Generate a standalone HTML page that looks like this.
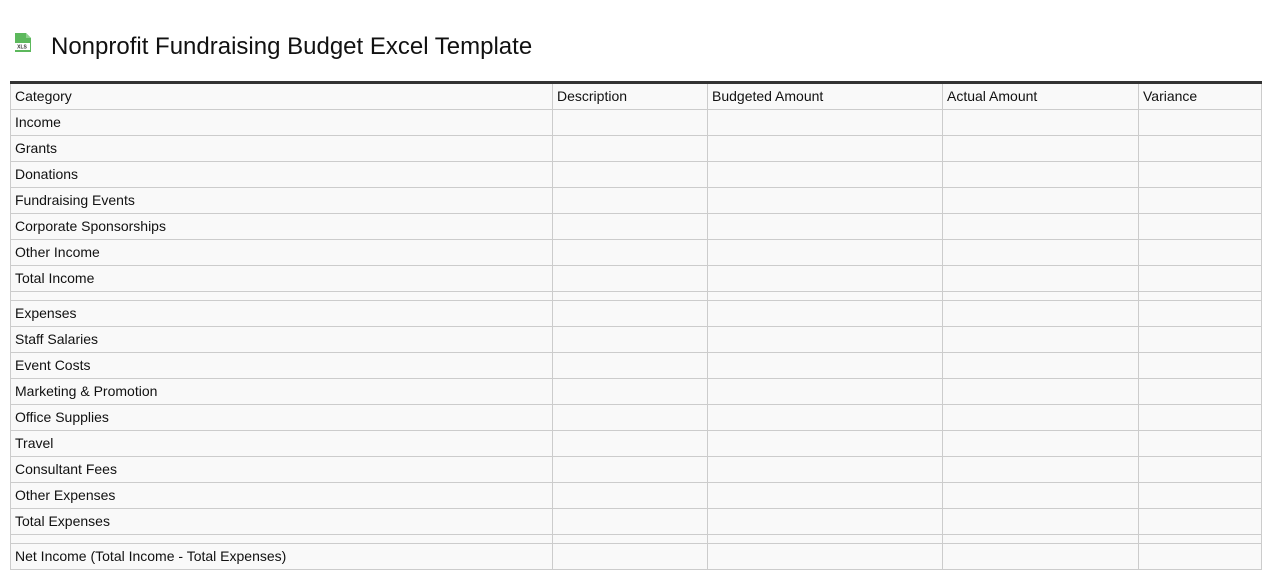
<!DOCTYPE html>
<html><head><style>
body{margin:0;background:#fff;font-family:"Liberation Sans",Roboto,sans-serif;}
h1{position:absolute;left:51px;top:31px;margin:0;font-size:24px;font-weight:normal;color:#111;line-height:32px;}
.icon{position:absolute;left:13px;top:32px;}
table{position:absolute;left:10px;top:81px;width:1252px;border-collapse:collapse;border-top:3px solid #333;table-layout:fixed;}
td{border:1px solid #ccc;background:#f9f9f9;font-size:14px;color:#111;padding:0 4px;height:25px;line-height:25px;white-space:nowrap;overflow:hidden;}
tr.sp td{height:8px;line-height:8px;}
</style></head><body>
<svg class="icon" width="20" height="22" viewBox="0 0 20 22"><path d="M2 1h11l5 5v14H2z" fill="#5cb85c"/><path d="M13 1v5h5" fill="#8fd18f"/><rect x="1" y="11" width="16" height="7" fill="#fff"/><text x="9" y="16.5" font-size="5" text-anchor="middle" font-family="Liberation Sans" font-weight="bold" fill="#333">XLS</text></svg>
<h1>Nonprofit Fundraising Budget Excel Template</h1>
<table>
<colgroup><col style="width:542px"><col style="width:155px"><col style="width:235px"><col style="width:196px"><col style="width:123px"></colgroup>
<tr><td>Category</td><td>Description</td><td>Budgeted Amount</td><td>Actual Amount</td><td>Variance</td></tr>
<tr><td>Income</td><td></td><td></td><td></td><td></td></tr>
<tr><td>Grants</td><td></td><td></td><td></td><td></td></tr>
<tr><td>Donations</td><td></td><td></td><td></td><td></td></tr>
<tr><td>Fundraising Events</td><td></td><td></td><td></td><td></td></tr>
<tr><td>Corporate Sponsorships</td><td></td><td></td><td></td><td></td></tr>
<tr><td>Other Income</td><td></td><td></td><td></td><td></td></tr>
<tr><td>Total Income</td><td></td><td></td><td></td><td></td></tr>
<tr class="sp"><td></td><td></td><td></td><td></td><td></td></tr>
<tr><td>Expenses</td><td></td><td></td><td></td><td></td></tr>
<tr><td>Staff Salaries</td><td></td><td></td><td></td><td></td></tr>
<tr><td>Event Costs</td><td></td><td></td><td></td><td></td></tr>
<tr><td>Marketing &amp; Promotion</td><td></td><td></td><td></td><td></td></tr>
<tr><td>Office Supplies</td><td></td><td></td><td></td><td></td></tr>
<tr><td>Travel</td><td></td><td></td><td></td><td></td></tr>
<tr><td>Consultant Fees</td><td></td><td></td><td></td><td></td></tr>
<tr><td>Other Expenses</td><td></td><td></td><td></td><td></td></tr>
<tr><td>Total Expenses</td><td></td><td></td><td></td><td></td></tr>
<tr class="sp"><td></td><td></td><td></td><td></td><td></td></tr>
<tr><td>Net Income (Total Income - Total Expenses)</td><td></td><td></td><td></td><td></td></tr>
</table>
</body></html>
